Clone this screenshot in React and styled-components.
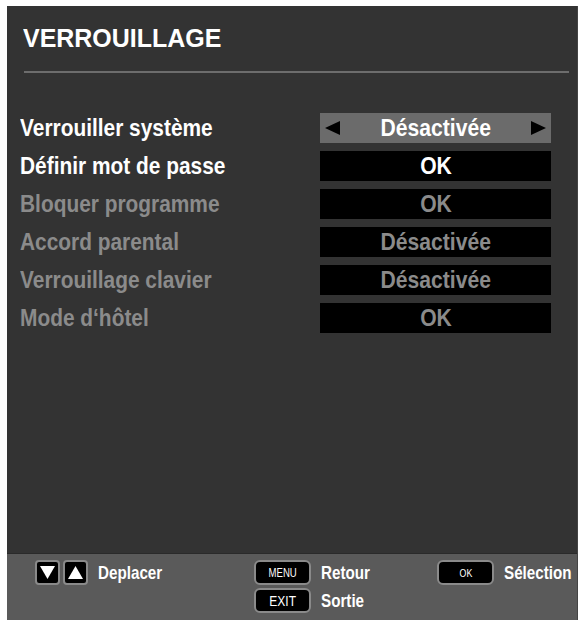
import styled, { createGlobalStyle } from 'styled-components';

const GlobalStyle = createGlobalStyle`
html, body {
    margin: 0;
    padding: 0;
    background: #fff;
}
body {
    font-family: "Liberation Sans", Arial, sans-serif;
}
`

const Panel = styled.div`
margin: 6px 6px 0 7px;
width: 571px;
height: 614px;
background-color: #333333;
display: flex;
flex-direction: column;
box-sizing: border-box;
border-right: 1px solid #444;
`

const Title = styled.h1`
margin: 17px 0 0 16px;
font-size: 26px;
line-height: 30px;
font-weight: bold;
color: #fff;
`

const Narrow = styled.span`
display: inline-block;
white-space: nowrap;
transform: scaleX(${props => props.scale || 0.9});
transform-origin: ${props => props.origin || 'left'} center;
`

const Rule = styled.div`
margin: 18px 8px 0 17px;
height: 2px;
background-color: #6d6d6d;
`

const List = styled.div`
margin-top: 40px;
padding-left: 13px;
display: flex;
flex-direction: column;
gap: 8px;
`

const Row = styled.div`
display: grid;
grid-template-columns: 300px 231px;
align-items: center;
height: 30px;
`

const Label = styled.div`
font-size: 24px;
line-height: 30px;
font-weight: bold;
color: ${props => props.dim ? '#8b8b8b' : '#fff'};
`

const ValueBox = styled.div`
position: relative;
height: 30px;
display: flex;
align-items: center;
justify-content: center;
background-color: ${props => props.active ? '#6b6b6b' : '#000'};
color: ${props => props.dim ? '#8b8b8b' : '#fff'};
font-size: 24px;
line-height: 30px;
font-weight: bold;
`

const Arrow = styled.span`
position: absolute;
top: 8px;
${props => props.side}: 5px;
width: 0;
height: 0;
border-top: 7.5px solid transparent;
border-bottom: 7.5px solid transparent;
${props => props.side === 'left'
        ? 'border-right: 15px solid #000;'
        : 'border-left: 15px solid #000;'}
`

const Spacer = styled.div`
flex: 1;
`

const Footer = styled.div`
height: 67px;
background-color: #5a5a5a;
border-top: 1px solid #2a2a2a;
box-sizing: border-box;
padding: 6px 0 0 28px;
display: grid;
grid-template-columns: 219px 183px auto;
align-items: start;
`

const Group = styled.div`
display: flex;
flex-direction: column;
gap: 3px;
`

const Hint = styled.div`
display: flex;
align-items: center;
gap: 10px;
height: 25px;
`

const HintText = styled.span`
color: #fff;
font-size: 19px;
font-weight: bold;
`

const KeyRow = styled.div`
display: flex;
gap: 3px;
`

const ArrowKey = styled.div`
width: 25px;
height: 25px;
box-sizing: border-box;
border: 2px solid #8a8a8a;
border-radius: 4px;
background-color: #000;
display: flex;
align-items: center;
justify-content: center;
`

const Key = styled.div`
width: 57px;
height: 25px;
flex-shrink: 0;
box-sizing: border-box;
border: 2px solid #8a8a8a;
border-radius: 6px;
background-color: #000;
display: flex;
align-items: center;
justify-content: center;
`

const KeyLabel = styled.span`
display: inline-block;
color: #fff;
font-size: ${props => props.size || 12}px;
transform: scaleX(0.8);
`

const Tri = ({ up }) => (
    <svg width="17" height="15" viewBox="0 0 17 15">
        <polygon points={up ? '8.5,1 16,14 1,14' : '1,1 16,1 8.5,14'} fill="#fff" />
    </svg>
)

const rows = [
    { label: 'Verrouiller système', value: 'Désactivée', active: true },
    { label: 'Définir mot de passe', value: 'OK' },
    { label: 'Bloquer programme', value: 'OK', dim: true },
    { label: 'Accord parental', value: 'Désactivée', dim: true },
    { label: 'Verrouillage clavier', value: 'Désactivée', dim: true },
    { label: 'Mode d‘hôtel', value: 'OK', dim: true },
]

const App = () => {
    return (
        <>
            <GlobalStyle />
            <Panel>
                <Title><Narrow scale={0.96}>VERROUILLAGE</Narrow></Title>
                <Rule />
                <List>
                    {rows.map((item, index) => (
                        <Row key={index}>
                            <Label dim={item.dim}><Narrow scale={0.87}>{item.label}</Narrow></Label>
                            <ValueBox active={item.active} dim={item.dim}>
                                {item.active && <Arrow side="left" />}
                                <Narrow scale={0.88} origin="center">{item.value}</Narrow>
                                {item.active && <Arrow side="right" />}
                            </ValueBox>
                        </Row>
                    ))}
                </List>
                <Spacer />
                <Footer>
                    <Group>
                        <Hint>
                            <KeyRow>
                                <ArrowKey><Tri /></ArrowKey>
                                <ArrowKey><Tri up /></ArrowKey>
                            </KeyRow>
                            <HintText><Narrow scale={0.8}>Deplacer</Narrow></HintText>
                        </Hint>
                    </Group>
                    <Group>
                        <Hint>
                            <Key><KeyLabel size={12}>MENU</KeyLabel></Key>
                            <HintText><Narrow scale={0.8}>Retour</Narrow></HintText>
                        </Hint>
                        <Hint>
                            <Key><KeyLabel size={15}>EXIT</KeyLabel></Key>
                            <HintText><Narrow scale={0.8}>Sortie</Narrow></HintText>
                        </Hint>
                    </Group>
                    <Group>
                        <Hint>
                            <Key><KeyLabel size={11}>OK</KeyLabel></Key>
                            <HintText><Narrow scale={0.8}>Sélection</Narrow></HintText>
                        </Hint>
                    </Group>
                </Footer>
            </Panel>
        </>
    )
}

export default App
